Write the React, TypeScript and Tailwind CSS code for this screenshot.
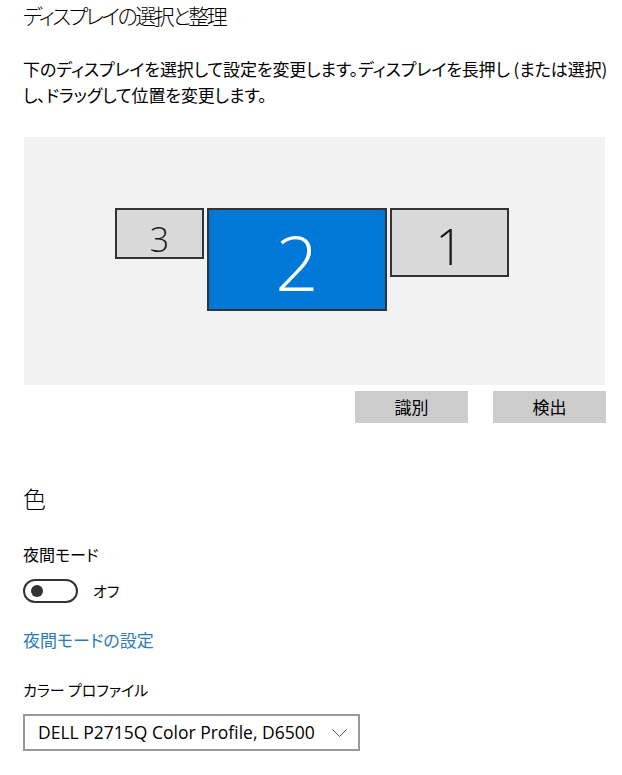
import React from "react";

const jp = "font-['Noto_Sans_CJK_JP','Noto_Sans',sans-serif] [font-feature-settings:'palt']";

const Monitor = ({
  n,
  active,
  className,
}: {
  n: string;
  active?: boolean;
  className: string;
}) => (
  <div
    className={`absolute flex items-center justify-center border-2 border-[#333] font-['Open_Sans',sans-serif] font-light leading-none ${
      active ? "bg-[#0078d7] text-white" : "bg-[#d9d9d9] text-[#1a1a1a]"
    } ${className}`}
  >
    {n}
  </div>
);

export default function App() {
  return (
    <div className={`min-h-screen bg-white pl-[23px] text-black ${jp}`}>
      <h1 className="text-[21px] font-light leading-[30px] tracking-[-2.5px]">ディスプレイの選択と整理</h1>
      <p className="mt-[26px] whitespace-nowrap text-[17px] leading-[26px] tracking-[-0.1px]">
        下のディスプレイを選択して設定を変更します。ディスプレイを長押し (または選択)
        <br />
        し、ドラッグして位置を変更します。
      </p>

      {/* arrangement canvas */}
      <div className="relative mt-[29px] ml-[1px] h-[248px] w-[581px] bg-[#f2f2f2]">
        <Monitor n="3" className="left-[91px] top-[71px] h-[51px] w-[89px] pt-[10px] text-[34px]" />
        <Monitor n="2" active className="left-[183px] top-[71px] h-[103px] w-[180px] pt-[4px] text-[76px]" />
        <Monitor n="1" className="left-[366px] top-[71px] h-[69px] w-[119px] pt-[8px] text-[49px]" />
      </div>

      <div className="mt-[6px] flex w-[583px] justify-end gap-[25px]">
        <button className="h-[32px] w-[113px] bg-[#cccccc] text-[17px]">識別</button>
        <button className="h-[32px] w-[113px] bg-[#cccccc] text-[17px]">検出</button>
      </div>

      <h2 className="mt-[60px] text-[23px] font-light leading-[30px]">色</h2>

      <div className="mt-[30px] text-[16px] leading-[22px]">夜間モード</div>
      <div className="mt-[14px] flex items-center gap-[15px]">
        <div className="flex h-[24px] w-[55px] items-center rounded-full border-2 border-[#333] pl-[6px]">
          <div className="h-[12px] w-[12px] rounded-full bg-[#333]" />
        </div>
        <span className="text-[15px]">オフ</span>
      </div>

      <div className="mt-[26px] text-[17px] leading-[22px] text-[#2d7bb6]">夜間モードの設定</div>

      <div className="mt-[28px] text-[15px] leading-[22px]">カラー プロファイル</div>
      <div className="mt-[13px] flex h-[37px] w-[337px] items-center justify-between border-2 border-[#999] pl-[13px] pr-[11px]">
        <span className="font-['Open_Sans',sans-serif] text-[17.5px] text-black">DELL P2715Q Color Profile, D6500</span>
        <svg width="15" height="8" viewBox="0 0 15 8" fill="none" stroke="#555" strokeWidth="1">
          <path d="M0.5 0.5l7 7 7-7" />
        </svg>
      </div>
    </div>
  );
}
